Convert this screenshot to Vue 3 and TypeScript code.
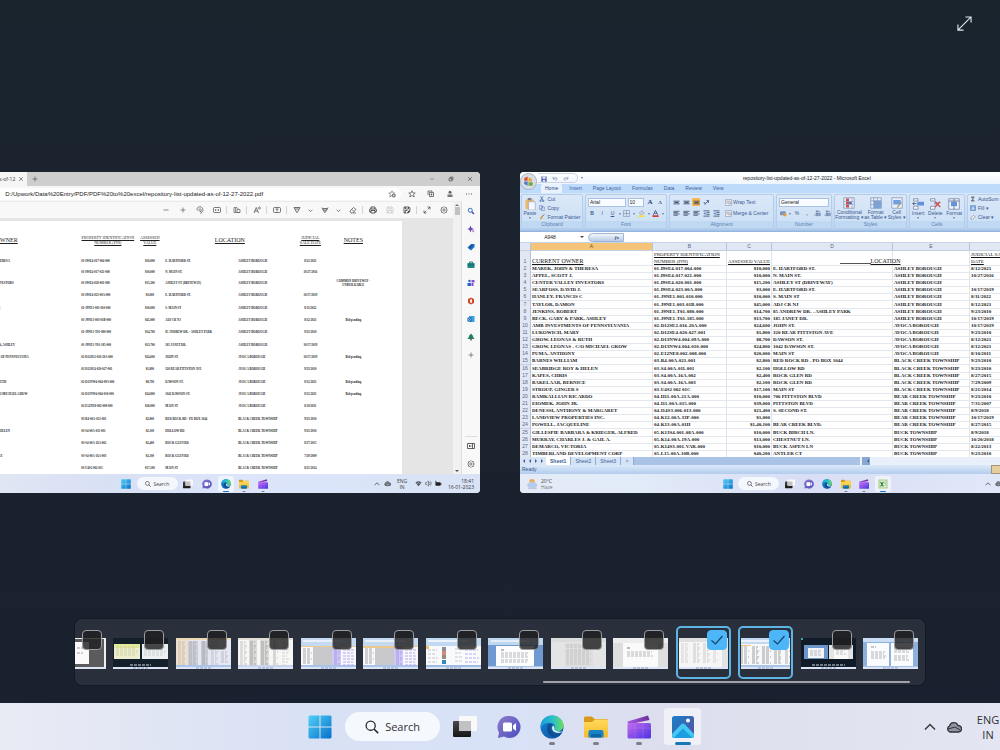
<script setup lang="ts">
import { ref } from 'vue'

interface Parcel {
  owner: string
  pin: string
  value: string
  location: string
  borough: string
  date: string
  note?: string
}

const source: string[] = [
  'MAREK, JOHN & THERESA|01-I9SE4-017-004-000|$10,000|E. HARTFORD ST.|ASHLEY BOROUGH|8/12/2021',
  'APPEL, SCOTT J.|01-I9SE4-017-021-000|$10,000|N. MAIN ST.|ASHLEY BOROUGH|10/27/2016',
  'CENTER VALLEY INVESTORS|01-I9SE4-020-001-000|$15,200|ASHLEY ST (DRIVEWAY)|ASHLEY BOROUGH||COMMON DRIVEWAY - UNBUILDABLE',
  'SEARFOSS, DAVID J.|01-I9SE4-023-00A-000|$3,000|E. HARTFORD ST.|ASHLEY BOROUGH|10/17/2019',
  'HANLEY, FRANCIS C|01-J9NE1-001-010-000|$10,000|S. MAIN ST|ASHLEY BOROUGH|8/11/2022',
  'TAYLOR, DAMON|01-J9NE1-003-01B-000|$45,000|ADJ CR NJ|ASHLEY BOROUGH|8/12/2021|Bid pending',
  'JENKINS, ROBERT|01-J9NE1-T01-080-000|$14,700|85 ANDREW DR. - ASHLEY PARK|ASHLEY BOROUGH|9/23/2010',
  'BECK, GARY & PARK, ASHLEY|01-J9NE1-T01-185-000|$13,700|185 JANET DR.|ASHLEY BOROUGH|10/17/2019',
  'AMB INVESTMENTS OF PENNSYLVANIA|02-D12SE2-016-20A-000|$24,600|JOHN ST.|AVOCA BOROUGH|10/17/2019|Bid pending',
  'LUKOWICH, MARY|02-D12SE4-020-027-001|$1,800|320 REAR PITTSTON AVE|AVOCA BOROUGH|9/23/2010',
  'GROW, LEONAS & RUTH|02-D13NW4-004-09A-000|$8,700|DAWSON ST.|AVOCA BOROUGH|8/12/2021|Bid pending',
  'GROW, LEONAS - C/O MICHAEL GROW|02-D13NW4-004-010-000|$24,800|1042 DAWSON ST.|AVOCA BOROUGH|8/12/2021|Bid pending',
  'PUMA, ANTHONY|02-E12NE8-002-008-000|$20,000|MAIN ST|AVOCA BOROUGH|8/10/2011',
  'BARNES WILLIAM|03-R4-00A-021-001|$2,800|RED ROCK RD - PO BOX 1044|BLACK CREEK TOWNSHIP|9/23/2010',
  'SEABRIDGE ROY & HELEN|03-S4-00A-011-001|$2,100|HOLLOW RD|BLACK CREEK TOWNSHIP|9/23/2010',
  'KAPES, CHRIS|03-S4-00A-16A-002|$2,400|ROCK GLEN RD|BLACK CREEK TOWNSHIP|8/27/2015',
  'BAKELAAR, BERNICE|03-S4-00A-16A-003|$2,100|ROCK GLEN RD|BLACK CREEK TOWNSHIP|7/29/2009',
  'STROUP, GINGER S|03-U4S2 002 01C|$17,100|MAIN ST|BLACK CREEK TOWNSHIP|8/21/2014',
  'RAMKALLIAN RICARDO|04-H11-00A-21A-000|$10,000|706 PITTSTON BLVD|BEAR CREEK TOWNSHIP|9/23/2010',
  'EIOMEK, JOHN JR.|04-I11-00A-015-000|$39,000|PITTSTON BLVD|BEAR CREEK TOWNSHIP|7/31/2007',
  'DENESSI, ANTHONY & MARGARET|04-I14S3-006-013-000|$21,400|S. SECOND ST.|BEAR CREEK TOWNSHIP|8/9/2018',
  'LANDVIEW PROPERTIES INC.|04-K12-00A-33P-000|$1,000||BEAR CREEK TOWNSHIP|10/17/2019',
  'POWELL, JACQUELINE|04-K13-00A-01H|$1,40,100|BEAR CREEK BLVD.|BEAR CREEK TOWNSHIP|8/27/2015',
  'GILLESPIE BARBARA & KRIEGER, ALFRED|05-K13S4-001-08A-000|$10,000|BUCK BIRCH LN.|BUCK TOWNSHIP|8/9/2018',
  'MURRAY, CHARLES J. & GAIL A.|05-K14-00A-19A-000|$13,000|CHESTNUT LN.|BUCK TOWNSHIP|10/20/2018',
  'DEMARCO, VICTORIA|05-K14S3-001-VAR-000|$10,000|BUCK ASPEN LN|BUCK TOWNSHIP|8/22/2013',
  'TIMBERLAND DEVELOPMENT CORP|05-L15-00A-10B-000|$40,200|ANTLER CT|BUCK TOWNSHIP|9/23/2010'
]

const parcels: Parcel[] = source.map((line) => {
  const [owner, pin, value, location, borough, date, note] = line.split('|')
  return { owner, pin, value, location, borough, date, note }
})
const pageParcels = parcels.slice(0, 18)

const address = ref('D:/Upwork/Data%20Entry/PDF/PDF%20to%20excel/repository-list-updated-as-of-12-27-2022.pdf')
const cellName = ref('A948')

const pdfTools = ['minus', 'plus', 'rotate', 'fit', '|', 'page', '|', 'read', '|', 'text', '|', 'pen', 'v', 'marker', 'v', 'eraser', '|', 'print', 'save', 'saveas', '|', 'expand', 'gear']
const sideTools = ['s-search', 's-spark', 's-tag', 's-case', 's-people', 's-office', 's-outlook', 's-tree', 'plus']
const ribbonTabs = ['Home', 'Insert', 'Page Layout', 'Formulas', 'Data', 'Review', 'View']
const letters = ['A', 'B', 'C', 'D', 'E', 'F']

interface App { icon: string; label: string; state?: string }
const baseApps: App[] = [
  { icon: 'task', label: 'Task view' },
  { icon: 'chat', label: 'Chat' },
  { icon: 'edge', label: 'Edge' },
  { icon: 'files', label: 'File Explorer', state: 'open' },
  { icon: 'clip', label: 'Clipchamp', state: 'open' }
]
const leftApps: App[] = baseApps.map((a) => (a.icon === 'edge' ? { ...a, state: 'active' } : a))
const rightApps: App[] = [...baseApps, { icon: 'excel', label: 'Excel', state: 'active' }]
const mainApps: App[] = [
  ...baseApps.map((a) => (a.icon === 'edge' ? { ...a, state: 'open' } : a)),
  { icon: 'photos', label: 'Photos', state: 'active' }
]

type Box = [number, number, number, number, string]
type Text = [number, number, number, number, number, string]
interface Thumb { name: string; bg: string; boxes: Box[]; text: Text[]; on: boolean }

const bar: Box = [0, 29, 55, 2, '#dde4f5']
const dots: Text = [20, 30, 16, 1, 2, '#8aa0c8']
const purpleSheet: Box[] = [[0, 0, 55, 8, '#c5daf0'], [2, 2, 40, 2, '#e8f1fb'], [0, 8, 55, 1, '#edc98a'], [12, 9, 20, 19, '#c9c9cb'], [31, 9, 9, 19, '#cfc8f4'], [0, 27, 55, 2, '#a9c4e8'], bar]
const purpleText: Text[] = [[2, 11, 9, 8, 2, '#a9a9ad'], [33, 10, 6, 9, 2, '#a497ea'], [42, 12, 12, 6, 3, '#b5a8ee'], dots]

const thumbs = ref<Thumb[]>([
  { name: 'Reader', bg: '#f0f0f2', boxes: [[0, 1, 53, 28, '#5b5b5e'], [0, 4, 38, 22, '#fafafa'], bar], text: [[26, 10, 8, 2, 5, '#a0a0a0']], on: false },
  { name: 'Desktop windows', bg: '#131f2b', boxes: [[1, 6, 26, 15, '#eceecf'], [1, 6, 26, 4, '#e3e99a'], [29, 6, 26, 15, '#edf0f0'], bar], text: [[3, 9, 22, 5, 2, '#ced2a4'], [31, 9, 22, 5, 2, '#ccd1d3'], [17, 27, 22, 1, 2, '#d6dde6'], dots], on: false },
  { name: 'Sheet with totals', bg: '#e5e8f2', boxes: [[0, 0, 12, 29, '#ebdfd0'], [12, 3, 10, 25, '#cdced6'], [25, 3, 7, 25, '#c9cbd3'], [0, 0, 55, 2, '#ead9b6'], [0, 27, 55, 2, '#abc5ea'], bar], text: [[2, 4, 8, 12, 2, '#cdbda5'], [13, 4, 8, 12, 2, '#aeb0ba'], [26, 4, 5, 12, 2, '#a5a8b3'], [35, 4, 7, 12, 2, '#c0c2cb'], [45, 14, 7, 6, 2, '#b9bbc4'], dots], on: false },
  { name: 'Repository list', bg: '#f7f7f6', boxes: [[0, 0, 55, 2, '#e2e0d6'], [11, 2, 8, 26, '#dadad8'], [22, 2, 9, 26, '#dcdcd9'], [0, 27, 55, 2, '#c7d5ec'], bar], text: [[2, 4, 7, 12, 2, '#c3c3c1'], [12, 4, 6, 12, 2, '#a5a5a3'], [23, 4, 7, 12, 2, '#a3a3a0'], [35, 4, 5, 12, 2, '#b5b5b3'], [44, 6, 7, 8, 3, '#d0d0ce'], dots], on: false },
  { name: 'Comparison sheet', bg: '#f8f8fc', boxes: purpleSheet, text: purpleText, on: false },
  { name: 'Comparison sheet, second', bg: '#f8f8fc', boxes: [...purpleSheet, [0, 8, 31, 2, '#ecc98c']], text: purpleText, on: false },
  { name: 'Product sheet', bg: '#f9fafc', boxes: [[0, 0, 55, 8, '#c2daf1'], [2, 2, 40, 2, '#edf4fb'], [0, 8, 3, 3, '#efbf60'], [16, 9, 4, 4, '#8b8f95'], [16, 13, 4, 4, '#d58a78'], [16, 17, 4, 4, '#9b8a80'], [16, 22, 4, 4, '#3189b4'], [0, 27, 55, 2, '#9fbde4'], bar], text: [[2, 12, 10, 4, 4, '#c2c5cc'], [29, 11, 8, 4, 4, '#c6c9cf'], [39, 12, 14, 4, 4, '#b9aeec'], dots], on: false },
  { name: 'Document', bg: '#6f9ad1', boxes: [[0, 0, 55, 7, '#bfd6ef'], [3, 2, 38, 2, '#e4eefa'], [8, 8, 38, 20, '#fdfdfe'], [0, 28, 55, 1, '#a9c5ea'], bar], text: [[13, 12, 4, 1, 2, '#777b84'], [13, 15, 28, 3, 2, '#b4b7bd'], [13, 22, 28, 2, 2, '#b4b7bd'], dots], on: false },
  { name: 'Scanned page', bg: '#e4e4e5', boxes: [[0, 0, 55, 4, '#dadbdc'], [14, 5, 28, 24, '#dededf'], bar], text: [[15, 7, 25, 2, 2, '#c3c3c5'], [15, 12, 25, 8, 2, '#c3c3c5'], dots], on: false },
  { name: 'Letter', bg: '#dededf', boxes: [[0, 0, 55, 5, '#ededee'], [10, 5, 35, 24, '#fafafa'], bar], text: [[14, 10, 4, 1, 2, '#777777'], [14, 14, 26, 3, 2, '#b8b8b8'], dots], on: false },
  { name: 'Repository list PDF', bg: '#f6f6f6', boxes: [[0, 0, 55, 4, '#dfdfe0'], [46, 4, 9, 25, '#e3e3e3'], bar], text: [[5, 6, 8, 10, 2, '#d3d3d3'], [17, 6, 7, 10, 2, '#c9c9c9'], [27, 6, 7, 10, 2, '#cccccc'], [37, 6, 5, 10, 2, '#d4d4d4'], dots], on: true },
  { name: 'Repository list workbook', bg: '#f7f8fa', boxes: [[0, 0, 55, 6, '#c3d9f2'], [3, 2, 40, 2, '#eaf2fb'], [0, 7, 13, 1, '#f0c579'], [0, 27, 55, 2, '#aac5ea'], bar], text: [[2, 9, 9, 9, 2, '#aaaaaa'], [14, 9, 7, 9, 2, '#a1a1a1'], [24, 9, 9, 9, 2, '#a0a0a0'], [36, 9, 8, 9, 2, '#a5a5a5'], [47, 9, 5, 9, 2, '#b3b3b3'], dots], on: true },
  { name: 'Desktop documents', bg: '#111b28', boxes: [[0, 0, 2, 2, '#3ea4ad'], [3, 7, 24, 14, '#6d95c9'], [7, 10, 16, 10, '#f2f4f7'], [28, 7, 24, 14, '#e3e4e6'], [33, 10, 14, 11, '#f8f8f8'], bar], text: [[9, 13, 12, 3, 2, '#b8bbc2'], [35, 12, 10, 3, 2, '#c3c3c3'], [11, 27, 34, 1, 2, '#d2dbe5'], dots], on: false },
  { name: 'Two page document', bg: '#8eb0dc', boxes: [[0, 0, 55, 4, '#c9ddf3'], [4, 5, 22, 23, '#fafbfc'], [28, 5, 22, 23, '#fafbfc'], [0, 28, 55, 1, '#a4c0e6'], bar], text: [[8, 9, 6, 1, 2, '#8b9099'], [8, 14, 15, 4, 2, '#b2b5bb'], [31, 10, 15, 3, 2, '#b2b5bb'], [31, 18, 15, 3, 2, '#b2b5bb'], dots], on: false }
])
</script>

<template>
  <main class="screen">
    <svg class="sprite" aria-hidden="true">
      <defs>
        <linearGradient id="g-win" x1="0" y1="0" x2="1" y2="1"><stop offset="0" stop-color="#4fd0f7" /><stop offset="1" stop-color="#0870c9" /></linearGradient>
        <linearGradient id="g-chat" x1="0" y1="0" x2="1" y2="1"><stop offset="0" stop-color="#8d7bc9" /><stop offset="1" stop-color="#4c4fc0" /></linearGradient>
        <linearGradient id="g-edge" x1="0" y1="0" x2="1" y2="0"><stop offset="0" stop-color="#1b9fe0" /><stop offset=".55" stop-color="#2bc0c6" /><stop offset="1" stop-color="#6be05a" /></linearGradient>
        <linearGradient id="g-edge2" x1="0" y1="0" x2="1" y2="1"><stop offset="0" stop-color="#1584d6" /><stop offset="1" stop-color="#0f4f9e" /></linearGradient>
        <linearGradient id="g-file" x1="0" y1="0" x2="0" y2="1"><stop offset="0" stop-color="#ffda5c" /><stop offset="1" stop-color="#f6b92b" /></linearGradient>
        <linearGradient id="g-clip" x1="0" y1="0" x2="1" y2="1"><stop offset="0" stop-color="#c66bf0" /><stop offset="1" stop-color="#4a33e0" /></linearGradient>
        <linearGradient id="g-clip2" x1="0" y1="0" x2="1" y2="0"><stop offset="0" stop-color="#a85be8" /><stop offset="1" stop-color="#6a2f9c" /></linearGradient>
        <linearGradient id="g-photo" x1="0" y1="0" x2="1" y2="1"><stop offset="0" stop-color="#1680c8" /><stop offset="1" stop-color="#5a4fa0" /></linearGradient>
        <linearGradient id="g-task" x1="0" y1="0" x2="0" y2="1"><stop offset="0" stop-color="#4a4a4a" /><stop offset="1" stop-color="#161616" /></linearGradient>
      </defs>
      <symbol id="i-win" viewBox="0 0 24 24"><path d="M1.500.500H11.500V11.500H.500V1.500zM12.500.500H22.500L23.500 1.500V11.500H12.500zM.500 12.500H11.500V23.500H1.500L.500 22.500zM12.500 12.500H23.500V22.500L22.500 23.500H12.500z" fill="url(#g-win)" /></symbol>
      <symbol id="i-task" viewBox="0 0 24 24"><rect x="0" y="6" width="18" height="16" rx="1" fill="url(#g-task)" /><rect x="6" y="1" width="18" height="15" rx="1" fill="#fbfafa" fill-opacity=".95" /><path d="M6 6H18V16H6z" fill="#c2c2c4" /></symbol>
      <symbol id="i-chat" viewBox="0 0 24 24"><path d="M12.500 1A11 11 0 1 1 7 21.500L1 23L2 17.500A11 11 0 0 1 12.500 1z" fill="url(#g-chat)" /><rect x="6" y="7.500" width="9" height="9" rx="1.500" fill="#fff" /><path d="M16 10.500L19 8V16L16 13.500z" fill="#fff" /></symbol>
      <symbol id="i-edge" viewBox="0 0 24 24"><circle cx="12" cy="12" r="11.500" fill="url(#g-edge2)" /><path d="M.700 10C2 4 6.500.500 12 .500C19 .500 23.500 5.500 23.500 10.500C23.500 14 21 16 18 16C15.500 16 14 15 14.500 13.800C16 11 14 7.800 9.500 7.800C5 7.800 1.500 10 .700 14z" fill="url(#g-edge)" /><path d="M9 9C5.500 12 6.500 19 12 21.500C17 23.500 20.500 20 21.500 18C17 20 12 18.500 11 14.500C10.500 12 11.500 10.500 12.500 10C11.500 8.800 10 8.600 9 9z" fill="#0d4f93" /><path d="M13 10.500C11.500 12 11.500 15.500 15 17.200C18 18.500 21 18 22.500 16.500C20 17 14 16 14.400 13.800C14.800 12 14 11 13 10.500z" fill="#dceefa" /></symbol>
      <symbol id="i-files" viewBox="0 0 24 24"><path d="M0 3Q0 1.500 1.500 1.500H8L10.500 4H22.500Q24 4 24 5.500V12H0z" fill="#d99a1a" /><path d="M0 7H8L11 4.500H22.500Q24 4.500 24 6V21Q24 22.500 22.500 22.500H1.500Q0 22.500 0 21z" fill="url(#g-file)" /><path d="M4.500 22.500V17Q4.500 15 6.500 15H17.500Q19.500 15 19.500 17V22.500z" fill="#1683c4" /><path d="M7 22.500V20Q7 19 8 19H16Q17 19 17 20V22.500z" fill="#0d65a3" /></symbol>
      <symbol id="i-clip" viewBox="0 0 24 24"><path d="M.500 6.500L21 .500L22.500 5L1.500 9.500Q.500 8 .500 6.500z" fill="url(#g-clip2)" /><rect x=".500" y="8" width="23.500" height="15.500" rx="1.500" fill="url(#g-clip)" /><path d="M.500 13H24M8 8V23.500M16 8V23.500" stroke="#e0b5fd" stroke-width=".6" opacity=".3" /></symbol>
      <symbol id="i-photos" viewBox="0 0 24 24"><rect x="1" y="1" width="22" height="22" rx="2.500" fill="url(#g-photo)" /><path d="M1 19L10 9.500Q12 7.500 14 9.500L23 19V20.500Q23 23 20.500 23H3.500Q1 23 1 20.500z" fill="#43c8f3" /><path d="M3 22.500L12 13.500L21 22.500Q20.500 23 19.500 23H4.500z" fill="#1b9fe0" /><circle cx="17" cy="5.500" r="2" fill="#fff" /></symbol>
      <symbol id="i-excel" viewBox="0 0 24 24"><rect x="1" y="1" width="22" height="22" rx="1" fill="#a9d08b" /><rect x="4" y="4" width="16" height="16" fill="#eef7e6" /><path d="M6 7L13 18M13 7L6 18" stroke="#2d7d35" stroke-width="2.800" /><path d="M15 7H19M15 11H19M15 15H19" stroke="#4f9a4c" stroke-width="1.500" /></symbol>
      <symbol id="i-search" viewBox="0 0 16 16"><circle cx="6.500" cy="6.500" r="5.200" fill="none" stroke="#2a2a2e" stroke-width="1.500" /><path d="M10.300 10.300L15 15" stroke="#2a2a2e" stroke-width="1.800" /></symbol>
      <symbol id="i-up" viewBox="0 0 12 12"><path d="M1 8.500L6 3.500L11 8.500" fill="none" stroke="#333" stroke-width="1.400" /></symbol>
      <symbol id="i-cloud" viewBox="0 0 16 16"><path d="M4 13A3.200 3.200 0 0 1 3.500 7A4.500 4.500 0 0 1 12 6.500A3.200 3.200 0 0 1 12.500 13z" fill="#8f96a3" stroke="#333" stroke-width="1.300" /><path d="M2 10L9 8L14 11" stroke="#333" fill="none" /></symbol>
      <symbol id="i-wifi" viewBox="0 0 16 16"><path d="M8 14L1 6Q8 0 15 6z" fill="#555b66" /><path d="M3 8.500Q8 4 13 8.500" stroke="#dfe6f5" fill="none" /></symbol>
      <symbol id="i-sound" viewBox="0 0 16 16"><path d="M1 6H4L8 2V14L4 10H1zM10 5Q12.500 8 10 11M12.500 3Q16 8 12.500 13" fill="none" stroke="#444" stroke-width="1.200" /></symbol>
      <symbol id="i-battery" viewBox="0 0 16 16"><rect x="1" y="5" width="12" height="8" rx="1.500" fill="#222" /><path d="M14 7.500V10.500M2 2V6" stroke="#222" stroke-width="2" /></symbol>
      <symbol id="i-haze" viewBox="0 0 24 24"><circle cx="11" cy="8" r="6" fill="#f2a951" /><path d="M5 20A4.500 4.500 0 0 1 5 11A6 6 0 0 1 16 11A4.500 4.500 0 0 1 19 20z" fill="#b5cdec" /><path d="M3 22H21" stroke="#8ba8d0" stroke-width="2" /></symbol>

      <symbol id="i-minus" viewBox="0 0 16 16"><path d="M3 8H13" stroke="#555" stroke-width="1.300" /></symbol>
      <symbol id="i-plus" viewBox="0 0 16 16"><path d="M3 8H13M8 3V13" stroke="#555" stroke-width="1.300" /></symbol>
      <symbol id="i-rotate" viewBox="0 0 16 16"><path d="M2 9A6 6 0 1 1 11 12.500M8 10L11 12.500L9 15.500M5 8L8 5L11 8L8 11z" fill="none" stroke="#444" stroke-width="1.300" /></symbol>
      <symbol id="i-fit" viewBox="0 0 16 16"><rect x="1" y="3" width="14" height="10" rx="2" fill="none" stroke="#444" stroke-width="1.400" /><path d="M4 8H7M9 8H12M5 6.500V9.500M11 6.500V9.500" stroke="#444" stroke-width="1.300" /></symbol>
      <symbol id="i-page" viewBox="0 0 16 16"><path d="M2 13V3H8L11 6M5 13V5H7M8 7H14V13H8zM2 13H14" fill="none" stroke="#555" stroke-width="1.300" /></symbol>
      <symbol id="i-read" viewBox="0 0 16 16"><path d="M2 14L6.500 3L11 14M3.500 10H9.500M11 2Q13 4 11 6M13 1Q16 4 13 7" fill="none" stroke="#444" stroke-width="1.400" /></symbol>
      <symbol id="i-text" viewBox="0 0 16 16"><rect x="1" y="3" width="14" height="10" rx="2" fill="none" stroke="#444" stroke-width="1.400" /><path d="M5 6H11M8 6V11" stroke="#444" stroke-width="1.400" /></symbol>
      <symbol id="i-pen" viewBox="0 0 16 16"><path d="M2 3H14L8.500 13H7.500zM4.500 6H11.500" fill="none" stroke="#444" stroke-width="1.500" /></symbol>
      <symbol id="i-marker" viewBox="0 0 16 16"><path d="M2 3L4 8H12L14 3M5 8L7 13L10 11V8M4 5H12" fill="none" stroke="#444" stroke-width="1.500" /></symbol>
      <symbol id="i-eraser" viewBox="0 0 16 16"><path d="M2 10L9 3L14 7L7 14H4zM5.500 6.500L10 11M8 14H14" fill="none" stroke="#444" stroke-width="1.400" /></symbol>
      <symbol id="i-print" viewBox="0 0 16 16"><path d="M4 6V2H12V6M4 12H1.500V6H14.500V12H12M4 9H12V14H4z" fill="none" stroke="#333" stroke-width="1.600" /></symbol>
      <symbol id="i-save" viewBox="0 0 16 16"><path d="M2 2H12L14 4V14H2zM5 2V6H11V2M4.500 14V9H11.500V14" fill="none" stroke="#c5c5c5" stroke-width="1.400" /></symbol>
      <symbol id="i-saveas" viewBox="0 0 16 16"><path d="M14 8V4L12 2H2V14H7M5 2V6H11V2M4.500 14V9H9" fill="none" stroke="#333" stroke-width="1.500" /><path d="M8 15L9 12L13 8L15 10L11 14z" fill="#333" /></symbol>
      <symbol id="i-expand" viewBox="0 0 16 16"><path d="M9 2H14V7M14 2L9.500 6.500M7 14H2V9M2 14L6.500 9.500" fill="none" stroke="#444" stroke-width="1.400" /></symbol>
      <symbol id="i-gear" viewBox="0 0 16 16"><path d="M8 1L10 3L13 3.500V6.500L15 8L13 9.500V12.500L10 13L8 15L6 13L3 12.500V9.500L1 8L3 6.500V3.500L6 3z" fill="none" stroke="#444" stroke-width="1.300" /><circle cx="8" cy="8" r="2.300" fill="none" stroke="#444" stroke-width="1.300" /></symbol>
      <symbol id="i-v" viewBox="0 0 8 8"><path d="M1 3L4 5.500L7 3" fill="none" stroke="#666" stroke-width="1.300" /></symbol>
      <symbol id="i-star" viewBox="0 0 16 16"><path d="M8 1.500L10 6H14.500L11 9L12.500 14L8 11L3.500 14L5 9L1.500 6H6z" fill="none" stroke="#444" stroke-width="1.300" /></symbol>
      <symbol id="i-staradd" viewBox="0 0 16 16"><path d="M8 11L3.500 14L5 9L1.500 6H6L8 1.500L10 6H14" fill="none" stroke="#666" stroke-width="1.200" /><circle cx="11.500" cy="11" r="4" fill="#777" /><path d="M9.500 11H13.500M11.500 9V13" stroke="#fff" /></symbol>
      <symbol id="i-coll" viewBox="0 0 16 16"><path d="M2 10V2H10V4M5 5H13V13H5zM9 7V11M7 9H11" fill="none" stroke="#444" stroke-width="1.400" /></symbol>
      <symbol id="i-person" viewBox="0 0 16 16"><circle cx="8" cy="4.500" r="3" fill="#666" /><path d="M3 14V9H13V14z" fill="#777" /></symbol>
      <symbol id="i-more" viewBox="0 0 16 16"><path d="M2 8H4M7 8H9M12 8H14" stroke="#444" stroke-width="1.800" /></symbol>
      <symbol id="i-close" viewBox="0 0 16 16"><path d="M3 3L13 13M13 3L3 13" stroke="#333" stroke-width="1.500" /></symbol>
      <symbol id="i-restore" viewBox="0 0 16 16"><path d="M3 6H10V13H3zM6 6V3H13V10H10" fill="none" stroke="#333" stroke-width="1.600" /></symbol>
      <symbol id="i-dock" viewBox="0 0 16 16"><path d="M1 3H15V13H1zM11 3V13M9 8H4M6 6L4 8L6 10" fill="none" stroke="#333" stroke-width="1.500" /></symbol>

      <symbol id="i-s-search" viewBox="0 0 16 16"><circle cx="6.500" cy="6.500" r="4" fill="none" stroke="#2f6fc9" stroke-width="2" /><path d="M9.500 9.500L14 14" stroke="#3c3f9c" stroke-width="2.500" /></symbol>
      <symbol id="i-s-spark" viewBox="0 0 16 16"><path d="M7 1L9 6L14 8L9 10L7 15L5 10L1 8L5 6z" fill="#6c45b8" /><path d="M12 9L15 12L12 15L10 12z" fill="#a784d8" /></symbol>
      <symbol id="i-s-tag" viewBox="0 0 16 16"><path d="M1 9L8 2H15V8L8 15z" fill="#1d6fc4" /><path d="M4 11L11 4" stroke="#1c4f94" stroke-width="2.500" /></symbol>
      <symbol id="i-s-case" viewBox="0 0 16 16"><rect x="1" y="4" width="14" height="10" rx="1" fill="#1c8b7f" /><path d="M5 4V2H11V4M1 8H15" fill="none" stroke="#175f73" stroke-width="1.800" /></symbol>
      <symbol id="i-s-people" viewBox="0 0 16 16"><circle cx="5" cy="4" r="2.500" fill="#2c5fc0" /><path d="M1 14V8H8V14z" fill="#2c62ca" /><path d="M9 2H15V7H9zM9 8H13V14H9z" fill="#8a4fd6" /></symbol>
      <symbol id="i-s-office" viewBox="0 0 16 16"><path d="M8 1L14 4V12L8 15L2 12V4z" fill="#d2482a" /><path d="M7 5L10 4V12L6 11V6z" fill="#f6ebe7" /></symbol>
      <symbol id="i-s-outlook" viewBox="0 0 16 16"><rect x="4" y="2" width="11" height="12" rx="1" fill="#37a3e0" /><rect x="1" y="5" width="8" height="8" rx="1" fill="#0f62b0" /><circle cx="5" cy="9" r="2" fill="none" stroke="#fff" /></symbol>
      <symbol id="i-s-tree" viewBox="0 0 16 16"><path d="M8 1L13 7L11.500 7L15 12H1L4.500 7H3z" fill="#1f7f62" /><path d="M8 11V15" stroke="#4d3826" stroke-width="2.500" /></symbol>

      <symbol id="i-paste" viewBox="0 0 16 16"><rect x="2" y="2" width="11" height="13" rx="1" fill="#e8ba6c" /><rect x="5" y="0" width="5" height="3" fill="#7f7f8a" /><path d="M6 5H15V16H6z" fill="#f6f8fd" stroke="#8ea0c4" stroke-width=".8" /></symbol>
      <symbol id="i-cut" viewBox="0 0 16 16"><path d="M4 1L10 11M11 1L5 11" stroke="#3a5f9f" stroke-width="1.800" /><circle cx="4" cy="13" r="2" fill="none" stroke="#3a5f9f" stroke-width="1.800" /><circle cx="11" cy="13" r="2" fill="none" stroke="#3a5f9f" stroke-width="1.800" /></symbol>
      <symbol id="i-copy" viewBox="0 0 16 16"><path d="M1 2H9V11H1zM6 5H14V15H6z" fill="#f2f6fd" stroke="#4768a8" stroke-width="1.500" /></symbol>
      <symbol id="i-brush" viewBox="0 0 16 16"><path d="M14 1L7 8" stroke="#8a5a2c" stroke-width="2.500" /><path d="M2 11L7 6L10 9L5 15z" fill="#e0a23c" /></symbol>
      <symbol id="i-sigma" viewBox="0 0 16 16"><path d="M12 3H4L9 8L4 13H12" fill="none" stroke="#222" stroke-width="2" /></symbol>
      <symbol id="i-fill" viewBox="0 0 16 16"><rect x="1" y="1" width="14" height="14" rx="1" fill="#7da6dc" stroke="#3d629d" /><path d="M8 4V12M5 9L8 12L11 9" fill="none" stroke="#fff" stroke-width="2" /></symbol>
      <symbol id="i-clear" viewBox="0 0 16 16"><path d="M2 11L9 4L14 7L7 14H3z" fill="#f6f7fa" stroke="#5f6980" stroke-width="1.300" /></symbol>
      <symbol id="i-cond" viewBox="0 0 16 16"><path d="M1 1H15V15H1z" fill="#e6edf7" stroke="#8194b8" /><path d="M4 2H8V14H4z" fill="#c94e55" /><path d="M8 6H12V10H8z" fill="#5274b4" /><path d="M1 6H15M1 10H15M12 1V15" stroke="#9caccb" /></symbol>
      <symbol id="i-ftable" viewBox="0 0 16 16"><path d="M1 1H15V15H1z" fill="#e6edf7" stroke="#8194b8" /><path d="M5 5H15V15H5z" fill="#7aa2dc" /><path d="M1 5H15M1 10H15M5 1V15M10 1V15" stroke="#8b9dc0" /></symbol>
      <symbol id="i-cstyle" viewBox="0 0 16 16"><path d="M1 1H15V15H1z" fill="#e9eff8" stroke="#8194b8" /><path d="M3 4H13V10H3z" fill="#6fa0e2" /><path d="M14 7L8 14" stroke="#a28a62" stroke-width="1.500" /></symbol>
      <symbol id="i-insert" viewBox="0 0 16 16"><path d="M2 1H8V4H2zM2 11H8V15H2z" fill="#f7f9fd" stroke="#6f7f9e" /><path d="M7 5H16V10H7z" fill="#6392d6" /><path d="M1 7.500H6M3 5.500L1 7.500L3 9.500" fill="none" stroke="#333f5c" /></symbol>
      <symbol id="i-delete" viewBox="0 0 16 16"><path d="M2 1H8V4H2zM2 11H8V15H2z" fill="#f7f9fd" stroke="#6f7f9e" /><path d="M7 5H13V9H7z" fill="#8caede" /><path d="M8 5L15 12M15 5L8 12" stroke="#d64c3f" stroke-width="1.700" /></symbol>
      <symbol id="i-format" viewBox="0 0 16 16"><path d="M1 1H15V15H1z" fill="#f1f5fb" stroke="#6f7f9e" /><path d="M4 5H12V11H4z" fill="#6392d6" /><path d="M8 1V5M8 11V15M1 4H15" stroke="#4e5f86" /></symbol>
      <symbol id="i-lines" viewBox="0 0 16 16"><path d="M1 3H15M1 6H11M1 9H15M1 12H11" stroke="#3b4a69" stroke-width="1.800" /></symbol>
      <symbol id="i-bars" viewBox="0 0 16 16"><path d="M1 5H15M3 8H13M1 11H15" stroke="#3b4a69" stroke-width="2" /></symbol>
      <symbol id="i-indent" viewBox="0 0 16 16"><path d="M1 2H15M8 6H15M8 10H15M1 14H15" stroke="#3b4a69" stroke-width="1.800" /><path d="M6 5V11L1 8z" fill="#3f71c2" /></symbol>
      <symbol id="i-orient" viewBox="0 0 16 16"><path d="M3 12L13 4M8 3L13 4L12 9M2 7L6 12" fill="none" stroke="#475982" stroke-width="2" /></symbol>
      <symbol id="i-wrap" viewBox="0 0 16 16"><path d="M1 1H15V15H1z" fill="#eef3fb" stroke="#6478a3" /><path d="M3 5H12M3 9H10M13 6V11H8" fill="none" stroke="#8f7f7a" stroke-width="1.500" /></symbol>
      <symbol id="i-borders" viewBox="0 0 16 16"><path d="M1 1H15V15H1zM8 1V15M1 8H15" fill="none" stroke="#7b89a8" stroke-width="1.300" /></symbol>
      <symbol id="i-bucket" viewBox="0 0 16 16"><path d="M3 7L9 1L14 7L8 11z" fill="#cfd9ea" stroke="#6a7894" /><path d="M1 12H15V16H1z" fill="#f2e13a" /></symbol>
      <symbol id="i-acolor" viewBox="0 0 16 16"><path d="M3 11L8 1L13 11M5 7.500H11" fill="none" stroke="#2d467b" stroke-width="1.800" /><path d="M1 12H15V16H1z" fill="#d33a34" /></symbol>
      <symbol id="i-money" viewBox="0 0 16 16"><path d="M1 4H12V11H1z" fill="#7a98c8" stroke="#4e618b" /><circle cx="11" cy="11" r="4" fill="#d9a13e" /></symbol>
      <symbol id="i-decimal" viewBox="0 0 16 16"><path d="M2 11V13M5 7H8V13H5zM11 7H14V13H11zM13 3H5M7 1L5 3L7 5" fill="none" stroke="#42588b" stroke-width="1.500" /></symbol>
      <symbol id="i-disk" viewBox="0 0 16 16"><path d="M1 1H15V15H1z" fill="#4b5bb0" /><path d="M4 1H12V7H4zM5 10H11V15H5z" fill="#e9edf8" /></symbol>
      <symbol id="i-undo" viewBox="0 0 16 16"><path d="M3 2V8H9M3 8Q8 1 13 6Q14 10 10 13" fill="none" stroke="#7d92bd" stroke-width="2" /></symbol>
    </svg>

    <button class="fullscreen" aria-label="Full screen">
      <svg viewBox="0 0 16 16"><path d="M9 1H15V7M15 1L1 15M7 15H1V9" fill="none" stroke="#e4e7ea" stroke-width="1.200" /></svg>
    </button>

    <section class="stage">
      <div class="pane pane-left">
        <article class="window">
          <header class="tabs">
            <div class="tab"><span>repository-list-updated-as-of-12</span><button aria-label="Close tab"><svg class="i6"><use href="#i-close" /></svg></button></div>
            <button class="newtab" aria-label="New tab"><svg class="i8"><use href="#i-plus" /></svg></button>
            <div class="wincontrols">
              <button aria-label="Minimize"><svg class="i6"><use href="#i-minus" /></svg></button>
              <button aria-label="Restore"><svg class="i6"><use href="#i-restore" /></svg></button>
              <button aria-label="Close"><svg class="i6"><use href="#i-close" /></svg></button>
            </div>
          </header>
          <div class="addressbar">
            <div class="pill"><input v-model="address" aria-label="Address" /><svg class="i8"><use href="#i-staradd" /></svg></div>
            <button v-for="n in ['star', 'coll', 'person', 'more']" :key="n" :aria-label="n"><svg class="i8"><use :href="'#i-' + n" /></svg></button>
          </div>
          <div class="browser">
            <div class="viewer">
              <div class="pdftools">
                <template v-for="(t, i) in pdfTools" :key="i">
                  <i v-if="t === '|'" class="sep"></i>
                  <button v-else :class="{ slim: t === 'v' }" :aria-label="t"><svg><use :href="'#i-' + t" /></svg></button>
                </template>
              </div>
              <div class="paper">
                <table class="doc">
                  <thead>
                    <tr>
                      <th class="big first">CURRENT OWNER</th>
                      <th>PROPERTY IDENTIFICATION<br />NUMBER (PIN)</th>
                      <th>ASSESSED<br />VALUE</th>
                      <th class="big wide" colspan="2">LOCATION</th>
                      <th>JUDICIAL<br />SALE DATE</th>
                      <th class="big">NOTES</th>
                    </tr>
                  </thead>
                  <tbody>
                    <tr v-for="p in pageParcels" :key="p.pin">
                      <td class="owner">{{ p.owner }}</td>
                      <td>{{ p.pin }}</td>
                      <td class="mid">{{ p.value }}</td>
                      <td>{{ p.location }}</td>
                      <td>{{ p.borough }}</td>
                      <td class="mid">{{ p.date }}</td>
                      <td class="mid note">{{ p.note }}</td>
                    </tr>
                  </tbody>
                </table>
              </div>
              <div class="scroll"><span class="tri up"></span><span class="thumbbar"></span><span class="tri down"></span></div>
            </div>
            <nav class="side">
              <button v-for="s in sideTools" :key="s" :aria-label="s"><svg class="i8"><use :href="'#i-' + s" /></svg></button>
              <span class="rule"></span>
              <button aria-label="Dock"><svg class="i8"><use href="#i-dock" /></svg></button>
              <button aria-label="Settings"><svg class="i8"><use href="#i-gear" /></svg></button>
            </nav>
          </div>
          <footer class="mini">
            <div></div>
            <div class="apps">
              <button class="app" aria-label="Start"><svg><use href="#i-win" /></svg></button>
              <button class="search"><svg><use href="#i-search" /></svg>Search</button>
              <button v-for="a in leftApps" :key="a.icon" class="app" :class="a.state" :aria-label="a.label"><svg><use :href="'#i-' + a.icon" /></svg></button>
            </div>
            <div class="tray">
              <svg><use href="#i-up" /></svg><svg class="cloud"><use href="#i-cloud" /></svg>
              <span class="lang">ENG<br />IN</span>
              <svg><use href="#i-wifi" /></svg><svg><use href="#i-sound" /></svg><svg><use href="#i-battery" /></svg>
              <span class="clock">18:41<br />16-01-2023</span>
            </div>
          </footer>
        </article>
      </div>

      <div class="pane">
        <article class="window excel">
          <div class="titlebar">
            <button class="orb" aria-label="Office"><svg viewBox="0 0 20 20"><circle cx="10" cy="10" r="9.500" fill="#d9dfe9" stroke="#9fa9bb" /><path d="M5 6L9 4V9H5z" fill="#d9532c" /><path d="M10 5L14 7V10H10z" fill="#e2a52e" /><path d="M5 10H9V15L5 13z" fill="#4a79c4" /><path d="M10 11H15V15H10z" fill="#6fa845" /></svg></button>
            <div class="quick"><svg class="i6"><use href="#i-disk" /></svg><svg class="i6"><use href="#i-undo" /></svg><svg class="i6 flip"><use href="#i-undo" /></svg></div>
            <span class="arrow"></span>
            <h2>repository-list-updated-as-of-12-27-2022 - Microsoft Excel</h2>
          </div>
          <nav class="ribbontabs"><button v-for="(t, i) in ribbonTabs" :key="t" :class="{ current: i === 0 }">{{ t }}</button></nav>
          <div class="ribbon">
            <section class="g-clip">
              <div class="body">
                <button class="large"><svg><use href="#i-paste" /></svg>Paste<b class="arrow"></b></button>
                <div class="stack">
                  <button><svg><use href="#i-cut" /></svg>Cut</button>
                  <button><svg><use href="#i-copy" /></svg>Copy</button>
                  <button><svg><use href="#i-brush" /></svg>Format Painter</button>
                </div>
              </div>
              <h3>Clipboard</h3>
            </section>
            <section class="g-font">
              <div class="body rows">
                <div class="line"><select class="face" aria-label="Font"><option>Arial</option></select><select class="size" aria-label="Font size"><option>10</option></select><button class="aa">A</button><button class="aa small">A</button></div>
                <div class="line spread"><button><b>B</b></button><button><em>I</em></button><button><u>U</u></button><b class="arrow"></b><button aria-label="Borders"><svg><use href="#i-borders" /></svg></button><b class="arrow"></b><button aria-label="Fill"><svg><use href="#i-bucket" /></svg></button><b class="arrow"></b><button aria-label="Colour"><svg><use href="#i-acolor" /></svg></button><b class="arrow"></b></div>
              </div>
              <h3>Font</h3>
            </section>
            <section class="g-align">
              <div class="body rows">
                <div class="line"><button aria-label="Top"><svg><use href="#i-bars" /></svg></button><button aria-label="Middle"><svg><use href="#i-bars" /></svg></button><button class="lit" aria-label="Bottom"><svg><use href="#i-bars" /></svg></button><button aria-label="Orientation"><svg><use href="#i-orient" /></svg></button><i class="gap"></i><button class="word"><svg><use href="#i-wrap" /></svg>Wrap Text</button></div>
                <div class="line"><button aria-label="Left"><svg><use href="#i-lines" /></svg></button><button aria-label="Center"><svg><use href="#i-lines" /></svg></button><button aria-label="Right"><svg><use href="#i-lines" /></svg></button><button aria-label="Outdent"><svg><use href="#i-indent" /></svg></button><button aria-label="Indent"><svg><use href="#i-indent" /></svg></button><button class="word"><svg><use href="#i-wrap" /></svg>Merge &amp; Center</button></div>
              </div>
              <h3>Alignment</h3>
            </section>
            <section class="g-num">
              <div class="body rows">
                <div class="line"><select class="general" aria-label="Number format"><option>General</option></select></div>
                <div class="line spread"><button aria-label="Currency"><svg><use href="#i-money" /></svg></button><b class="arrow"></b><button>%</button><button><b>,</b></button><button aria-label="More decimals"><svg><use href="#i-decimal" /></svg></button><button aria-label="Fewer decimals"><svg><use href="#i-decimal" /></svg></button></div>
              </div>
              <h3>Number</h3>
            </section>
            <section class="g-style">
              <div class="body">
                <button class="large"><svg><use href="#i-cond" /></svg>Conditional<br />Formatting ▾</button>
                <button class="large"><svg><use href="#i-ftable" /></svg>Format<br />as Table ▾</button>
                <button class="large"><svg><use href="#i-cstyle" /></svg>Cell<br />Styles ▾</button>
              </div>
              <h3>Styles</h3>
            </section>
            <section class="g-cell">
              <div class="body">
                <button class="large"><svg><use href="#i-insert" /></svg>Insert<b class="arrow"></b></button>
                <button class="large"><svg><use href="#i-delete" /></svg>Delete<b class="arrow"></b></button>
                <button class="large"><svg><use href="#i-format" /></svg>Format<b class="arrow"></b></button>
              </div>
              <h3>Cells</h3>
            </section>
            <section class="g-edit">
              <div class="body">
                <div class="stack">
                  <button><svg><use href="#i-sigma" /></svg>AutoSum ▾</button>
                  <button><svg><use href="#i-fill" /></svg>Fill ▾</button>
                  <button><svg><use href="#i-clear" /></svg>Clear ▾</button>
                </div>
              </div>
              <h3>Editing</h3>
            </section>
          </div>
          <div class="formula"><input v-model="cellName" class="name" aria-label="Name box" /><b class="arrow dark"></b><span class="fx">fx</span><input class="entry" aria-label="Formula" /></div>
          <table class="sheet">
            <thead>
              <tr><th></th><th v-for="l in letters" :key="l" :class="{ picked: l === 'A' }">{{ l }}</th></tr>
            </thead>
            <tbody>
              <tr class="titles">
                <th>1</th><td class="big"><u>CURRENT OWNER</u></td><td><u>PROPERTY IDENTIFICATION<br />NUMBER (PIN)</u></td><td class="num"><u>ASSESSED VALUE</u></td><td class="big mid loc"><u>LOCATION</u></td><td></td><td><u>JUDICIAL SALE<br />DATE</u></td>
              </tr>
              <tr v-for="(p, i) in parcels" :key="p.pin">
                <th>{{ i + 2 }}</th><td>{{ p.owner }}</td><td>{{ p.pin }}</td><td class="num">{{ p.value }}</td><td>{{ p.location }}</td><td>{{ p.borough }}</td><td>{{ p.date }}</td>
              </tr>
            </tbody>
          </table>
          <div class="sheettabs">
            <span class="nav"><i class="tri left"></i><i class="tri left"></i><i class="tri right"></i><i class="tri right"></i></span>
            <button class="current">Sheet1</button><button>Sheet2</button><button>Sheet3</button><button aria-label="Insert sheet" class="add">✧</button>
            <span class="hscroll"><b class="tri left"></b></span>
          </div>
          <div class="status"><span>Ready</span><i></i></div>
          <footer class="mini seven">
            <div class="weather"><svg><use href="#i-haze" /></svg><span>20°C<br /><em>Haze</em></span></div>
            <div class="apps">
              <button class="app" aria-label="Start"><svg><use href="#i-win" /></svg></button>
              <button class="search"><svg><use href="#i-search" /></svg>Search</button>
              <button v-for="a in rightApps" :key="a.icon" class="app" :class="a.state" :aria-label="a.label"><svg><use :href="'#i-' + a.icon" /></svg></button>
            </div>
            <div class="tray">
              <svg><use href="#i-up" /></svg><svg class="cloud"><use href="#i-cloud" /></svg>
              <span class="lang">ENG<br />IN</span>
              <svg><use href="#i-wifi" /></svg><svg><use href="#i-sound" /></svg><svg><use href="#i-battery" /></svg>
              <span class="clock">18:41<br />16-01-2023</span>
            </div>
          </footer>
        </article>
      </div>
    </section>

    <section class="strip">
      <div class="reel">
        <label v-for="t in thumbs" :key="t.name" class="shot" :class="{ on: t.on }">
          <svg class="pic" viewBox="0 0 55 31" preserveAspectRatio="xMidYMid slice">
            <rect width="55" height="31" :fill="t.bg" />
            <rect v-for="(b, i) in t.boxes" :key="'b' + i" :x="b[0]" :y="b[1]" :width="b[2]" :height="b[3]" :fill="b[4]" />
            <template v-for="(l, i) in t.text" :key="'t' + i">
              <line v-for="n in l[3]" :key="n" :x1="l[0]" :x2="l[0] + l[2] - (n % 3)" :y1="l[1] + (n - 1) * l[4]" :y2="l[1] + (n - 1) * l[4]" :stroke="l[5]" stroke-width="1" stroke-dasharray="3 1" />
            </template>
          </svg>
          <input v-model="t.on" type="checkbox" :aria-label="t.name" />
          <svg v-if="t.on" class="tick" viewBox="0 0 20 20"><path d="M4.500 10.500L8.500 14L15.500 6" fill="none" stroke="#134668" stroke-width="1.200" /></svg>
        </label>
      </div>
      <div class="track"><span></span></div>
    </section>

    <footer class="taskbar">
      <div></div>
      <div class="apps">
        <button class="app" aria-label="Start"><svg><use href="#i-win" /></svg></button>
        <button class="search"><svg><use href="#i-search" /></svg>Search</button>
        <button v-for="a in mainApps" :key="a.icon" class="app" :class="a.state" :aria-label="a.label"><svg><use :href="'#i-' + a.icon" /></svg></button>
      </div>
      <div class="tray"><svg class="chev"><use href="#i-up" /></svg><svg><use href="#i-cloud" /></svg><span>ENG<br />IN</span></div>
    </footer>
  </main>
</template>

<style>
body { background: #1a222d; }
</style>

<style scoped>
* { box-sizing: border-box; }
.screen { position: relative; display: flex; flex-direction: column; min-height: 100vh; overflow: hidden; background: linear-gradient(#1a242d, #1b222e 60%, #192130); font-family: "Open Sans", "Noto Sans", sans-serif; }
.sprite { position: absolute; width: 0; height: 0; }
button { display: flex; align-items: center; justify-content: center; margin: 0; padding: 0; border: 0; background: none; color: inherit; font: inherit; white-space: nowrap; }
input, select { min-width: 0; margin: 0; padding: 0; border: 0; background: none; color: inherit; font: inherit; outline: 0; appearance: none; }
svg { display: block; flex: none; }
.i6 { width: 6px; height: 6px; }
.i8 { width: 8px; height: 8px; }
.fullscreen { position: absolute; top: 15px; right: 28px; width: 16px; height: 16px; }
.fullscreen svg { width: 15px; height: 15px; }

.stage { flex: 1; display: grid; grid-template-columns: minmax(0, 1fr) minmax(0, 1fr); gap: 40px; padding-top: 172px; align-items: start; }
.pane { display: flex; overflow: hidden; border-radius: 4px 0 0 4px; }
.pane-left { justify-content: flex-end; border-radius: 0 4px 4px 0; }
.window { flex: none; display: flex; flex-direction: column; height: 321px; aspect-ratio: 16 / 9; background: #fff; color: #333; font-size: 5px; line-height: 7px; overflow: hidden; }

.tabs { display: flex; align-items: center; height: 14px; background: #cecece; }
.tab { display: flex; justify-content: flex-end; align-items: center; gap: 3px; width: 118px; height: 14px; padding-right: 3px; background: #f5f5f5; white-space: nowrap; }
.newtab { margin-left: 4px; }
.wincontrols { display: flex; gap: 13px; margin-left: auto; padding-right: 7px; }
.addressbar { display: flex; align-items: center; gap: 11px; height: 15px; padding-right: 7px; background: #f7f7f7; }
.pill { flex: 1; display: flex; align-items: center; height: 12px; padding: 0 5px 0 96px; border-radius: 6px; background: #fff; }
.pill input { flex: 1; height: 12px; color: #222; font-family: "Liberation Sans", Arial, sans-serif; font-size: 6px; line-height: 8px; }
.addressbar > button:first-of-type { margin-left: -4px; }
.browser { flex: 1; display: flex; min-height: 0; }
.viewer { position: relative; flex: 1; display: flex; flex-direction: column; min-width: 0; background: #e5e5e5; }
.pdftools { display: flex; justify-content: flex-end; align-items: center; gap: 6px; height: 17px; padding-right: 12px; background: #f8f8f8; border-top: 1px solid #ebebeb; }
.pdftools button { width: 11px; height: 11px; }
.pdftools button svg { width: 8px; height: 8px; }
.pdftools .slim, .pdftools .slim svg { width: 5px; height: 5px; }
.sep { width: 1px; height: 8px; margin: 0 -2px; background: #d3d3d3; }
.paper { flex: 1; display: flex; margin: 3px 59px 0 0; background: #fff; min-height: 0; }
.doc { flex: 1; display: flex; flex-direction: column; padding-left: 57px; color: #1f1f1f; font-family: "Liberation Serif", serif; font-weight: bold; font-size: 3px; line-height: 4px; }
.doc tr { display: grid; grid-template-columns: 115px 53px 31px 73px 52px 40px 46px; align-items: center; white-space: nowrap; }
.doc thead { padding-top: 4px; }
.doc thead tr { height: 30px; }
.doc th { padding: 0; font-size: 4px; line-height: 5px; font-weight: normal; text-decoration: underline; display: flex; flex-direction: column; text-align: center; align-items: center; }
.doc .big { font-size: 6px; line-height: 8px; }
.doc .first { align-items: flex-start; }
.doc .wide { grid-column: span 2; padding-left: 4px; }
.doc tbody { flex: 1; display: grid; grid-template-rows: 11px 11px repeat(16, minmax(0, 1fr)); }
.doc td { padding: 0; }
.doc .owner { padding-left: 4px; }
.mid { text-align: center; }
.doc .note { white-space: normal; }
.scroll { position: absolute; top: 1px; right: 0; bottom: 0; width: 8px; display: flex; flex-direction: column; align-items: center; background: #f1f1f1; padding: 2px 0; }
.thumbbar { width: 5px; height: 8px; margin-top: 1px; background: #c1c1c1; }
.tri { width: 0; height: 0; border: 2px solid transparent; }
.tri.up { border-top: 0; border-bottom-color: #777; }
.tri.down { margin-top: auto; border-bottom: 0; border-top-color: #555; }
.tri.left { border-left: 0; border-right-color: #3e5f99; }
.tri.right { border-right: 0; border-left-color: #3e5f99; }
.side { display: flex; flex-direction: column; align-items: center; gap: 10px; width: 19px; padding: 6px 0; background: #f8f8f8; border-left: 1px solid #dedede; }
.rule { width: 12px; height: 1px; margin-top: auto; margin-bottom: -5px; background: #ddd; }

.mini { flex: none; display: grid; grid-template-columns: minmax(0, 1fr) auto minmax(0, 1fr); align-items: center; height: 19px; background: linear-gradient(90deg, #e9ebf4, #d8e0f4 35%, #dce5fa 60%, #d9e3f5); color: #444; font-size: 5px; line-height: 6px; }
.excel .mini { background: linear-gradient(90deg, #e4ebf7, #e2ebf8 20%, #d9def5 50%, #dfe7f8 80%); }
.mini .apps { display: flex; justify-content: space-between; align-items: center; width: 153px; }
.seven .apps { width: 171px; }
.app { position: relative; border: 0; }
.mini .app { width: 16px; height: 16px; border-radius: 2px; }
.mini .app svg { width: 10px; height: 10px; }
.mini .search { gap: 2px; width: 41px; height: 13px; border-radius: 7px; background: #f4f8fd; }
.mini .search svg { width: 6px; height: 6px; }
.app.active { background: rgba(255, 255, 255, .55); }
.app.open::after, .app.active::after { content: ""; position: absolute; left: 50%; bottom: 0; transform: translateX(-50%); width: 3px; height: 1px; border-radius: 1px; background: #7c7f8a; }
.mini .app.active::after { width: 6px; background: #1677c4; }
.mini .tray { display: flex; align-items: center; justify-content: flex-end; gap: 3px; padding-right: 6px; text-align: center; }
.mini .tray svg { width: 7px; height: 7px; }
.mini .tray svg:first-child { width: 6px; height: 6px; margin-right: 1px; }
.lang { width: 12px; margin: 0 4px 0 2px; }
.clock { width: 27px; margin-left: 2px; text-align: right; color: #333; }
.weather { display: flex; align-items: center; gap: 3px; padding-left: 7px; }
.weather svg { width: 11px; height: 11px; }
.weather em { font-style: normal; color: #777; }

.excel { font-family: "Liberation Sans", Arial, sans-serif; }
.excel .mini { font-family: "Open Sans", "Noto Sans", sans-serif; }
.titlebar { position: relative; display: flex; align-items: center; height: 12px; background: linear-gradient(#fff, #eef5fd); }
.orb { position: absolute; left: 0; top: 1px; width: 17px; height: 17px; z-index: 1; }
.orb svg { width: 17px; height: 17px; }
.quick { display: flex; gap: 5px; margin-left: 18px; padding: 2px 8px 2px 3px; border: 1px solid #c9d3e2; border-left: 0; border-radius: 0 6px 6px 0; height: 10px; }
.flip { transform: scaleX(-1); }
.arrow { width: 0; height: 0; border: 1px solid transparent; border-top: 2px solid #6579a0; border-bottom: 0; }
.titlebar .arrow { margin-left: 3px; }
.titlebar h2 { flex: 1; margin: 0; padding-right: 60px; font-size: 5px; line-height: 7px; font-weight: normal; text-align: center; color: #222; }
.ribbontabs { display: flex; align-items: flex-end; gap: 3px; height: 9px; padding-left: 21px; background: #bfdbfb; color: #3c5f9c; }
.ribbontabs button { padding: 0 4px; height: 9px; }
.ribbontabs .current { background: #e9f2fd; border-radius: 2px 2px 0 0; color: #2d4a82; }
.ribbon { display: flex; gap: 2px; height: 39px; padding: 1px 1px 3px; background: linear-gradient(#d8e7f9, #b9d3f0 92%, #8fb0dd); color: #3a5890; }
.ribbon section { display: flex; flex-direction: column; border: 1px solid #b4cdea; border-radius: 2px; background: linear-gradient(#dbe8f8, #cbdff5); overflow: hidden; }
.ribbon h3 { margin: 0; height: 7px; background: #c0d9f2; color: #5d80b5; font-size: 5px; line-height: 7px; font-weight: normal; text-align: center; }
.g-clip { width: 62px; } .g-font { width: 82px; } .g-align { width: 105px; } .g-num { width: 56px; } .g-style { width: 73px; } .g-cell { width: 56px; } .g-edit { flex: 1; }
.body { flex: 1; display: flex; justify-content: space-around; align-items: center; min-height: 0; }
.large { flex-direction: column; line-height: 5px; gap: 1px; }
.large svg { width: 12px; height: 12px; }
.stack { display: flex; flex-direction: column; gap: 2px; }
.stack button { justify-content: flex-start; gap: 2px; line-height: 7px; }
.stack svg { width: 6px; height: 6px; }
.g-edit .body { justify-content: flex-start; padding-left: 2px; }
.rows { flex-direction: column; align-items: stretch; justify-content: space-evenly; padding: 0 2px; }
.line { display: flex; align-items: center; gap: 2px; height: 9px; }
.line svg { width: 7px; height: 7px; }
.line > button { min-width: 8px; height: 8px; }
.spread { justify-content: space-between; }
.line select { height: 9px; padding-left: 1px; border: 1px solid #a9c1e2; background: #f8fbff; color: #222; line-height: 7px; }
.face { width: 39px; } .size { width: 17px; } .general { width: 50px; }
.aa { flex: 1; font-family: "Liberation Serif", serif; font-weight: bold; font-size: 7px; color: #233f77; }
.aa.small { font-size: 5px; }
.lit { background: #f7b64f; border-radius: 1px; }
.line .word { gap: 1px; margin-left: 3px; }
.gap { width: 8px; }

.formula { display: flex; align-items: center; height: 11px; border-bottom: 1px solid #c6d4e8; background: #fff; }
.name { width: 60px; height: 9px; text-align: center; color: #222; }
.arrow.dark { border-width: 2px 2px 0; border-top-color: #444; }
.fx { width: 36px; height: 9px; margin-left: 4px; padding-right: 4px; border: 1px solid #9fb6d8; border-radius: 5px 0 0 5px; background: linear-gradient(#f2f6fb, #b8cce7); color: #2d4675; font: italic bold 5px/7px "Liberation Serif", serif; text-align: right; }
.entry { flex: 1; height: 9px; }
.sheet { flex: 1; display: flex; flex-direction: column; min-height: 0; color: #171717; font-family: "Liberation Serif", serif; font-size: 5px; line-height: 7px; }
.sheet tr { display: grid; grid-template-columns: 11px 122px 74px 45px 121px 77px minmax(0, 1fr); white-space: nowrap; }
.sheet th { padding: 0; background: #e1e8f3; border-right: 1px solid #b5c4da; border-bottom: 1px solid #c5d0e1; color: #58677f; font-family: "Liberation Sans", sans-serif; font-weight: normal; font-size: 5px; text-align: center; }
.sheet thead tr { height: 8px; }
.sheet .picked { background: #f5c478; color: #6d5324; }
.sheet td { padding: 0 1px; border-right: 1px solid #e0e5ec; border-bottom: 1px solid #e4e8ee; font-weight: bold; }
.sheet tbody { flex: 1; display: grid; grid-template-rows: 14px repeat(27, minmax(0, 1fr)); min-height: 0; }
.sheet .num { text-align: right; }
.titles > * { display: flex; flex-direction: column; justify-content: flex-end; }
.sheet .titles td { font-weight: normal; }
.sheet .titles .big { font-size: 6px; }
.sheet .titles .num { align-items: flex-end; }
.sheet .titles .loc { align-items: center; padding-left: 108px; }
.titles .loc u { position: relative; }
.titles .loc u::before { content: ""; position: absolute; right: 100%; bottom: 1px; width: 31px; height: 1px; background: #555; }
.sheettabs { display: flex; height: 8px; background: #a9c2e5; color: #3d5f98; }
.sheettabs .nav { display: flex; align-items: center; gap: 4px; padding: 0 3px; background: #d9e5f5; }
.sheettabs button { padding: 0 4px; background: #d5e3f6; border-right: 1px solid #90aad2; }
.sheettabs .current { background: #fff; font-weight: bold; }
.hscroll { display: flex; align-items: center; flex: 1; margin-left: 226px; padding-left: 5px; border-left: 2px solid #eef3fb; background: linear-gradient(90deg, #88a7d3 8px, #e9f0fa 8px); }
.status { display: flex; align-items: center; justify-content: space-between; height: 9px; padding: 0 84px 0 2px; background: linear-gradient(#dce9f9, #b3cdee); color: #34528a; }
.status i { width: 16px; height: 9px; background: #e6cf9e; border: 1px solid #a5957a; }

.strip { align-self: center; display: flex; flex-direction: column; align-items: flex-end; width: calc(100% - 148px); max-width: 875px; height: 68px; margin-bottom: 17px; padding-top: 7px; border: 1px solid #141a25; border-radius: 8px; background: #2a303b; overflow: hidden; }
.reel { flex: none; display: grid; grid-template-columns: repeat(14, minmax(0, 1fr)); justify-items: center; width: 875px; margin-right: 3px; }
.shot { position: relative; width: 55px; height: 53px; padding-top: 12px; border-radius: 5px; }
.shot.on { padding: 10px 1px 0; border: 2px solid #5fb4e6; }
.pic { width: 100%; height: 31px; }
.shot input { position: absolute; top: 4px; right: 4px; width: 20px; height: 20px; border: 1px solid #9a9ca0; border-radius: 4px; background: rgba(32, 32, 33, .82); }
.shot.on input { top: 2px; right: 2px; background: #4cb6f8; border-color: #4cb6f8; }
.tick { position: absolute; top: 2px; right: 2px; width: 20px; height: 20px; pointer-events: none; }
.track { width: 100%; display: flex; justify-content: flex-end; padding: 2px 15px 0 0; }
.track span { width: 367px; height: 2px; border-radius: 1px; background: #a2a4ac; }

.taskbar { display: grid; grid-template-columns: minmax(0, 1fr) auto minmax(0, 1fr); align-items: center; height: 47px; padding-left: 3px; background: linear-gradient(90deg, #e9ebf4, #d9e1f4 30%, #d8e2f7 50%, #dddeed 66%, #e3e6f2); color: #303035; font-size: 11px; line-height: 15px; }
.taskbar .apps { display: flex; justify-content: space-between; align-items: center; width: 400px; }
.taskbar .app { width: 37px; height: 37px; border-radius: 3px; }
.taskbar .app svg { width: 24px; height: 24px; }
.taskbar .search { gap: 6px; width: 95px; height: 29px; border-radius: 15px; background: #f5f8fd; }
.taskbar .search svg { width: 14px; height: 14px; }
.taskbar .app::after { width: 6px; height: 3px; border-radius: 2px; }
.taskbar .app.active::after { width: 16px; background: #1778b8; }
.taskbar .tray { display: flex; align-items: center; justify-content: flex-end; gap: 10px; text-align: center; }
.taskbar .tray svg { width: 16px; height: 16px; }
.taskbar .tray .chev { width: 12px; height: 12px; }
.taskbar .tray span { width: 24px; margin-left: 4px; }
</style>
